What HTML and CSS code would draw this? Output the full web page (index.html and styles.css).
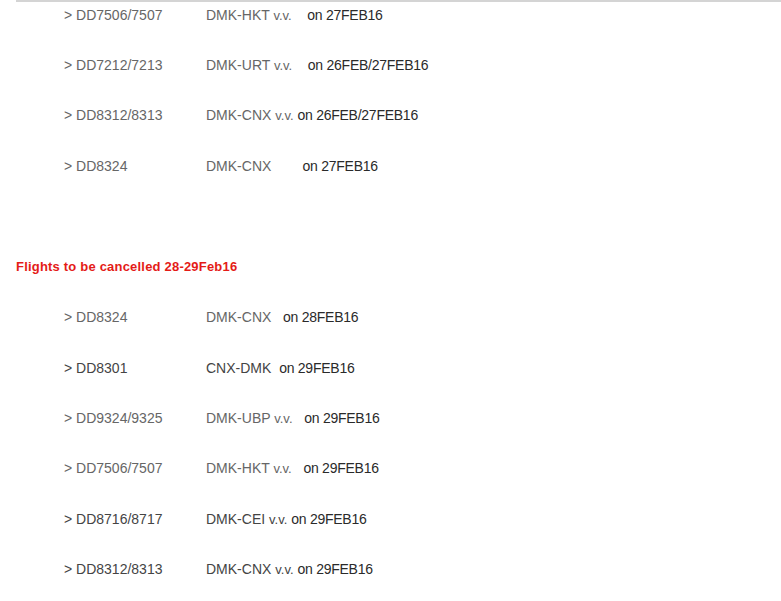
FILE: index.html
```html
<!DOCTYPE html>
<html lang="en">
<head>
  <meta charset="UTF-8">
  <title>Flight cancellations</title>
  <link rel="stylesheet" href="styles.css">
</head>
<body>

<div class="notice">
  <div class="flight"><span class="code">&gt; DD7506/7507</span><span class="route">DMK-HKT <small>v.v.</small>&nbsp;&nbsp;&nbsp;&nbsp;<b>on 27FEB16</b></span></div>
  <div class="flight"><span class="code">&gt; DD7212/7213</span><span class="route">DMK-URT <small>v.v.</small>&nbsp;&nbsp;&nbsp;&nbsp;<b>on 26FEB/27FEB16</b></span></div>
  <div class="flight"><span class="code">&gt; DD8312/8313</span><span class="route">DMK-CNX <small>v.v.</small>&nbsp;<b>on 26FEB/27FEB16</b></span></div>
  <div class="flight"><span class="code">&gt; DD8324</span><span class="route">DMK-CNX&nbsp;&nbsp;&nbsp;&nbsp;&nbsp;&nbsp;&nbsp; <b>on 27FEB16</b></span></div>

  <div class="flight blank"></div>

  <div class="heading">Flights to be cancelled 28-29Feb16</div>

  <div class="flight"><span class="code">&gt; DD8324</span><span class="route">DMK-CNX&nbsp;&nbsp; <b>on 28FEB16</b></span></div>
  <div class="flight dark"><span class="code">&gt; DD8301</span><span class="route">CNX-DMK&nbsp; <b>on 29FEB16</b></span></div>
  <div class="flight"><span class="code">&gt; DD9324/9325</span><span class="route">DMK-UBP <small>v.v.</small>&nbsp;&nbsp;&nbsp;<b>on 29FEB16</b></span></div>
  <div class="flight"><span class="code">&gt; DD7506/7507</span><span class="route">DMK-HKT <small>v.v.</small>&nbsp;&nbsp;&nbsp;<b>on 29FEB16</b></span></div>
  <div class="flight dark"><span class="code">&gt; DD8716/8717</span><span class="route">DMK-CEI <small>v.v.</small>&nbsp;<b>on 29FEB16</b></span></div>
  <div class="flight dark"><span class="code">&gt; DD8312/8313</span><span class="route">DMK-CNX <small>v.v.</small>&nbsp;<b>on 29FEB16</b></span></div>
</div>

</body>
</html>
```

FILE: styles.css
```css
body {
  margin: 0;
  font-family: "Liberation Sans", Arial, sans-serif;
  background: #fff;
}
.notice {
  margin-left: 16px;
  border-top: 2px solid #d4d4d4;
  padding-top: 4.5px;
}
.flight {
  display: flex;
  height: 16px;
  line-height: 16px;
  margin-bottom: 34.45px;
  padding-left: 48px;
  font-size: 14px;
  color: #666;
  white-space: nowrap;
}
.flight .code {
  width: 142px;
}
.flight small {
  font-size: 13px;
}
.flight b {
  font-weight: normal;
  letter-spacing: -0.25px;
  color: #2a2a2a;
}
.flight.dark {
  color: #444;
}
.heading {
  height: 16px;
  line-height: 16px;
  margin-bottom: 34.45px;
  font-size: 13px;
  font-weight: bold;
  letter-spacing: 0.2px;
  color: #e41b17;
}
```
